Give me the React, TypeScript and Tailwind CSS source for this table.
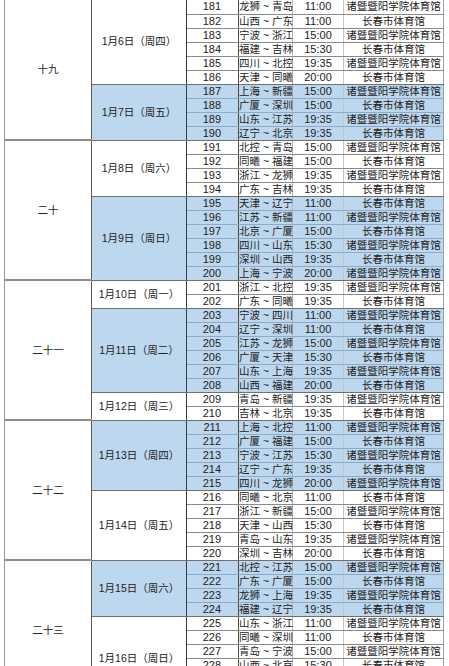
import React from "react";

type Game = [number, string, string, string];
type Day = { date: string; blue: boolean; games: Game[] };
type Round = { name: string; days: Day[] };

const Z = "诸暨暨阳学院体育馆";
const C = "长春市体育馆";

const rounds: Round[] = [
  {
    name: "十九",
    days: [
      {
        date: "1月6日（周四）",
        blue: false,
        games: [
          [181, "龙狮 ~ 青岛", "11:00", Z],
          [182, "山西 ~ 广东", "11:00", C],
          [183, "宁波 ~ 浙江", "15:00", Z],
          [184, "福建 ~ 吉林", "15:30", C],
          [185, "四川 ~ 北控", "19:35", Z],
          [186, "天津 ~ 同曦", "20:00", C],
        ],
      },
      {
        date: "1月7日（周五）",
        blue: true,
        games: [
          [187, "上海 ~ 新疆", "15:00", Z],
          [188, "广厦 ~ 深圳", "15:00", C],
          [189, "山东 ~ 江苏", "19:35", Z],
          [190, "辽宁 ~ 北京", "19:35", C],
        ],
      },
    ],
  },
  {
    name: "二十",
    days: [
      {
        date: "1月8日（周六）",
        blue: false,
        games: [
          [191, "北控 ~ 青岛", "15:00", Z],
          [192, "同曦 ~ 福建", "15:00", C],
          [193, "浙江 ~ 龙狮", "19:35", Z],
          [194, "广东 ~ 吉林", "19:35", C],
        ],
      },
      {
        date: "1月9日（周日）",
        blue: true,
        games: [
          [195, "天津 ~ 辽宁", "11:00", C],
          [196, "江苏 ~ 新疆", "11:00", Z],
          [197, "北京 ~ 广厦", "15:00", C],
          [198, "四川 ~ 山东", "15:30", Z],
          [199, "深圳 ~ 山西", "19:35", C],
          [200, "上海 ~ 宁波", "20:00", Z],
        ],
      },
    ],
  },
  {
    name: "二十一",
    days: [
      {
        date: "1月10日（周一）",
        blue: false,
        games: [
          [201, "浙江 ~ 北控", "19:35", Z],
          [202, "广东 ~ 同曦", "19:35", C],
        ],
      },
      {
        date: "1月11日（周二）",
        blue: true,
        games: [
          [203, "宁波 ~ 四川", "11:00", Z],
          [204, "辽宁 ~ 深圳", "11:00", C],
          [205, "江苏 ~ 龙狮", "15:00", Z],
          [206, "广厦 ~ 天津", "15:30", C],
          [207, "山东 ~ 上海", "19:35", Z],
          [208, "山西 ~ 福建", "20:00", C],
        ],
      },
      {
        date: "1月12日（周三）",
        blue: false,
        games: [
          [209, "青岛 ~ 新疆", "19:35", Z],
          [210, "吉林 ~ 北京", "19:35", C],
        ],
      },
    ],
  },
  {
    name: "二十二",
    days: [
      {
        date: "1月13日（周四）",
        blue: true,
        games: [
          [211, "上海 ~ 北控", "11:00", Z],
          [212, "广厦 ~ 福建", "15:00", C],
          [213, "宁波 ~ 江苏", "15:30", Z],
          [214, "辽宁 ~ 广东", "19:35", C],
          [215, "四川 ~ 龙狮", "20:00", Z],
        ],
      },
      {
        date: "1月14日（周五）",
        blue: false,
        games: [
          [216, "同曦 ~ 北京", "11:00", C],
          [217, "浙江 ~ 新疆", "15:00", Z],
          [218, "天津 ~ 山西", "15:30", C],
          [219, "青岛 ~ 山东", "19:35", Z],
          [220, "深圳 ~ 吉林", "20:00", C],
        ],
      },
    ],
  },
  {
    name: "二十三",
    days: [
      {
        date: "1月15日（周六）",
        blue: true,
        games: [
          [221, "北控 ~ 江苏", "15:00", Z],
          [222, "广东 ~ 广厦", "15:00", C],
          [223, "龙狮 ~ 上海", "19:35", Z],
          [224, "福建 ~ 辽宁", "19:35", C],
        ],
      },
      {
        date: "1月16日（周日）",
        blue: false,
        games: [
          [225, "山东 ~ 浙江", "11:00", Z],
          [226, "同曦 ~ 深圳", "11:00", C],
          [227, "青岛 ~ 宁波", "15:00", Z],
          [228, "山西 ~ 北京", "15:30", C],
          [229, "广厦 ~ 北控", "19:35", Z],
          [230, "新疆 ~ 辽宁", "20:00", C],
        ],
      },
    ],
  },
];

export default function App() {
  const rows: React.ReactNode[] = [];
  rounds.forEach((r) => {
    const total = r.days.reduce((s, d) => s + d.games.length, 0);
    r.days.forEach((d, di) => {
      d.games.forEach((g, gi) => {
        const bg = d.blue ? "bg-[#bdd7ee]" : "bg-white";
        const line = d.blue ? "border-[#8fa9c6]" : "border-[#8a8a8a]";
        const lastInDay = gi === d.games.length - 1;
        const bottom = lastInDay ? "border-b-[#707070]" : "";
        rows.push(
          <tr key={g[0]} className="h-[14px]">
            {di === 0 && gi === 0 && (
              <td
                rowSpan={total}
                className="border-l border-r border-b-2 border-l-[#9a9a9a] border-r-[#5a5a5a] border-b-[#8c8c8c] bg-white text-center align-middle"
              >
                {r.name}
              </td>
            )}
            {gi === 0 && (
              <td
                rowSpan={d.games.length}
                className={`border-r border-b border-r-[#3a3a3a] border-b-[#707070] ${bg} text-center align-middle`}
              >
                {d.date}
              </td>
            )}
            <td className={`border-b border-r border-r-[#4a4a4a] ${line} ${bottom} ${bg} p-0 pr-[17px] text-right text-[11px]`}>
              {g[0]}
            </td>
            <td className={`border-b border-r border-r-[#b5b5b5] ${line} ${bottom} ${bg} p-0 text-center whitespace-nowrap`}>
              {g[1]}
            </td>
            <td className={`border-b border-r border-r-[#c5c5c5] ${line} ${bottom} ${bg} p-0 text-center text-[11px]`}>
              {g[2]}
            </td>
            <td className={`border-b border-r border-r-[#a0a0a0] ${line} ${bottom} ${bg} p-0 text-center whitespace-nowrap`}>
              {g[3]}
            </td>
          </tr>
        );
      });
    });
  });

  return (
    <div className="h-[666px] w-[449px] overflow-hidden bg-white">
      <table
        className="ml-[4px] w-[439px] table-fixed border-collapse text-[10.5px] leading-[13px] text-[#222]"
        style={{ fontFamily: '"Liberation Sans", "Noto Sans CJK SC", sans-serif' }}
      >
        <colgroup>
          <col className="w-[87px]" />
          <col className="w-[95px]" />
          <col className="w-[52px]" />
          <col className="w-[54px]" />
          <col className="w-[51px]" />
          <col className="w-[100px]" />
        </colgroup>
        <tbody>{rows}</tbody>
      </table>
    </div>
  );
}
